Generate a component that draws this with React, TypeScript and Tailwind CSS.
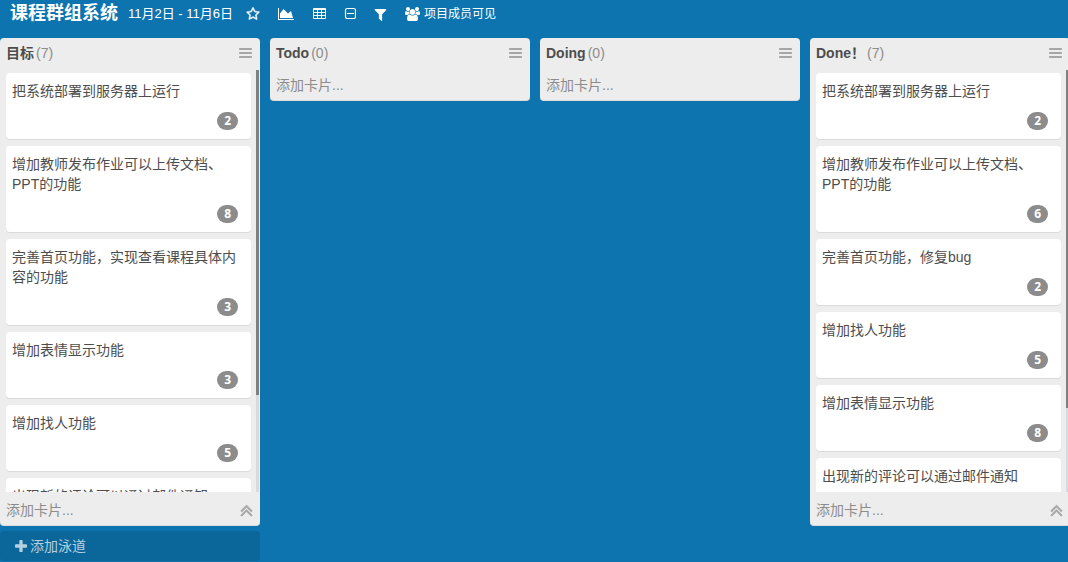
import type { ReactNode } from "react";

type Card = { title: string; points: number };
type Lane = { name: string; count: number; cards: Card[]; thumb?: string };

const lanes: Lane[] = [
  {
    name: "目标",
    count: 7,
    thumb: "h-[77%]",
    cards: [
      { title: "把系统部署到服务器上运行", points: 2 },
      { title: "增加教师发布作业可以上传文档、PPT的功能", points: 8 },
      { title: "完善首页功能，实现查看课程具体内容的功能", points: 3 },
      { title: "增加表情显示功能", points: 3 },
      { title: "增加找人功能", points: 5 },
      { title: "出现新的评论可以通过邮件通知", points: 3 },
    ],
  },
  { name: "Todo", count: 0, cards: [] },
  { name: "Doing", count: 0, cards: [] },
  {
    name: "Done！",
    count: 7,
    thumb: "h-[80%]",
    cards: [
      { title: "把系统部署到服务器上运行", points: 2 },
      { title: "增加教师发布作业可以上传文档、PPT的功能", points: 6 },
      { title: "完善首页功能，修复bug", points: 2 },
      { title: "增加找人功能", points: 5 },
      { title: "增加表情显示功能", points: 8 },
      { title: "出现新的评论可以通过邮件通知", points: 3 },
    ],
  },
];

function Glyph({ box, className, children }: { box: string; className: string; children: ReactNode }) {
  return (
    <svg viewBox={box} className={className} fill="currentColor" aria-hidden="true">
      {children}
    </svg>
  );
}

const Star = () => (
  <Glyph box="0 0 1792 1792" className="size-[14px]">
    <path
      stroke="currentColor"
      strokeWidth="60"
      d="M1201 1004l306-297-422-62-189-382-189 382-422 62 306 297-73 421 378-199 377 199zm527-357q0 22-26 48l-363 354 86 500q1 7 1 20 0 50-41 50-19 0-40-12l-449-236-449 236q-22 12-40 12-21 0-31.500-14.500t-10.500-35.500q0-6 2-20l86-500-364-354q-25-27-25-48 0-37 56-46l502-73 225-455q19-41 49-41t49 41l225 455 502 73q56 9 56 46z"
    />
  </Glyph>
);

const AreaChart = () => (
  <Glyph box="0 0 2048 1792" className="h-[14px] w-[16px]">
    <path d="M2048 1536v128h-2048v-1536h128v1408h1920zM1664 512l256 896h-1664v-576l448-576 576 576z" />
  </Glyph>
);

const Table = () => (
  <Glyph box="0 0 14 14" className="size-[14px]">
    <path
      fillRule="evenodd"
      d="M2 1h11a1 1 0 0 1 1 1v9a1 1 0 0 1-1 1h-11a1 1 0 0 1-1-1v-9a1 1 0 0 1 1-1zM2 3v2h3v-2zM6 3v2h3v-2zM10 3v2h3v-2zM2 6v2h3v-2zM6 6v2h3v-2zM10 6v2h3v-2zM2 9v2h3v-2zM6 9v2h3v-2zM10 9v2h3v-2z"
    />
  </Glyph>
);

const MinusSquare = () => (
  <Glyph box="0 0 12 14" className="h-[14px] w-[12px]">
    <rect x="1.500" y="1.500" width="10" height="10" rx="1.800" fill="none" stroke="currentColor" strokeWidth="1.200" />
    <path d="M3 6h7v1h-7z" />
  </Glyph>
);

const Filter = () => (
  <Glyph box="128 128 1536 1536" className="size-[13px]">
    <path d="M1595 295q17 41-14 70l-493 493v742q0 42-39 59-13 5-25 5-27 0-45-19l-256-256q-19-19-19-45v-486l-493-493q-31-29-14-70 17-39 59-39h1280q42 0 59 39z" />
  </Glyph>
);

const Users = () => (
  <Glyph box="0 0 1920 1792" className="h-[14px] w-[15px]">
    <path d="M593 896q-162 5-265 128h-134q-82 0-138-40.500t-56-118.500q0-353 124-353 6 0 43.500 21t97.500 42.500 119 21.500q67 0 133-23-5 37-5 66 0 139 81 256zm1071 637q0 120-73 189.500t-194 69.500h-874q-121 0-194-69.500t-73-189.500q0-53 3.500-103.500t14-109 26.500-108.500 43-97.500 62-81 85.500-53.500 111.500-20q10 0 43 21.500t73 48 107 48 135 21.500 135-21.500 107-48 73-48 43-21.500q61 0 111.500 20t85.500 53.500 62 81 43 97.500 26.500 108.500 14 109 3.500 103.500zm-1024-1277q0 106-75 181t-181 75-181-75-75-181 75-181 181-75 181 75 75 181zm704 384q0 159-112.500 271.500t-271.500 112.500-271.500-112.500-112.500-271.500 112.500-271.500 271.500-112.500 271.500 112.500 112.500 271.500zm576 225q0 78-56 118.500t-138 40.500h-134q-103-123-265-128 81-117 81-256 0-29-5-66 66 23 133 23 59 0 119-21.500t97.500-42.500 43.500-21q124 0 124 353zm-128-609q0 106-75 181t-181 75-181-75-75-181 75-181 181-75 181 75 75 181z" />
  </Glyph>
);

const Bars = () => (
  <Glyph box="0 0 13 10" className="h-[10px] w-[13px]">
    <rect width="13" height="2" rx="0.400" />
    <rect y="4" width="13" height="2" rx="0.400" />
    <rect y="8" width="13" height="2" rx="0.400" />
  </Glyph>
);

const DoubleUp = () => (
  <Glyph box="320 320 1152 1152" className="size-[13px]">
    <path
      stroke="currentColor"
      strokeWidth="60"
      d="M1395 1312q0 13-10 23l-50 50q-10 10-23 10t-23-10l-393-393-393 393q-10 10-23 10t-23-10l-50-50q-10-10-10-23t10-23l466-466q10-10 23-10t23 10l466 466q10 10 10 23zm0-384q0 13-10 23l-50 50q-10 10-23 10t-23-10l-393-393-393 393q-10 10-23 10t-23-10l-50-50q-10-10-10-23t10-23l466-466q10-10 23-10t23 10l466 466q10 10 10 23z"
    />
  </Glyph>
);

const Plus = () => (
  <Glyph box="192 128 1408 1408" className="size-[12px]">
    <path d="M1600 736v192q0 40-28 68t-68 28h-416v416q0 40-28 68t-68 28h-192q-40 0-68-28t-28-68v-416h-416q-40 0-68-28t-28-68v-192q0-40 28-68t68-28h416v-416q0-40 28-68t68-28h192q40 0 68 28t28 68v416h416q40 0 68 28t28 68z" />
  </Glyph>
);

function CardItem({ card }: { card: Card }) {
  return (
    <li className="flex shrink-0 flex-col rounded-[4px] bg-white pt-2 pr-[13px] pb-[9px] pl-[6px] shadow-[0_1px_0_#dadada]">
      <p className="text-sm leading-5 text-[#4d4d4d]">{card.title}</p>
      <span className="mt-[11px] self-end rounded-full bg-[#8c8c8c] px-[7px] font-['Noto_Sans',sans-serif] text-xs leading-[18px] font-bold text-white">
        {card.points}
      </span>
    </li>
  );
}

function LaneColumn({ lane }: { lane: Lane }) {
  const filled = lane.cards.length > 0;
  return (
    <section className="flex max-h-full w-[260px] shrink-0 flex-col overflow-hidden rounded-[4px] border-b border-[#dcdcdc] bg-[#ededed]">
      <header className="flex h-8 shrink-0 items-center gap-[2px] pr-2 pb-[2px] pl-[6px] text-sm">
        <h2 className="font-['Liberation_Sans','Noto_Sans_CJK_TC',sans-serif] font-bold text-[#4d4d4d]">{lane.name}</h2>
        <span className="text-[#8c8c8c]">({lane.count})</span>
        <button type="button" aria-label="菜单" className="ml-auto text-[#a6a6a6]">
          <Bars />
        </button>
      </header>
      {filled && (
        <div className="flex min-h-0 flex-1 pr-px">
          <ul className="flex flex-1 flex-col gap-[7px] overflow-hidden pt-[3px] pr-[5px] pl-[6px]">
            {lane.cards.map((card) => (
              <CardItem key={card.title} card={card} />
            ))}
          </ul>
          <div className="w-[3px] bg-[#d9dadd]">
            <div className={`bg-[#808080] ${lane.thumb}`} />
          </div>
        </div>
      )}
      <footer className={`flex shrink-0 items-center justify-between pr-[7px] pl-[6px] ${filled ? "h-[33px] pt-[3px]" : "h-[30px]"}`}>
        <button type="button" className="text-sm leading-5 text-[#8c8c8c]">
          添加卡片...
        </button>
        {filled && (
          <button type="button" aria-label="回到顶部" className="text-[#a6a6a6]">
            <DoubleUp />
          </button>
        )}
      </footer>
    </section>
  );
}

export default function App() {
  return (
    <div
      lang="zh-CN"
      className="flex h-screen flex-col overflow-hidden bg-[#0d74b0] font-['Liberation_Sans','Noto_Sans_CJK_SC',sans-serif]"
    >
      <header className="flex h-[38px] shrink-0 items-start pl-[10px] text-white">
        <h1 className="text-lg leading-[26px] font-bold">课程群组系统</h1>
        <span className="ml-[10px] text-[13px] leading-7">11月2日 - 11月6日</span>
        <nav className="ml-[13px] flex h-7 items-center gap-[18px]">
          <button type="button" aria-label="收藏"><Star /></button>
          <button type="button" aria-label="统计"><AreaChart /></button>
          <button type="button" aria-label="表格"><Table /></button>
          <button type="button" aria-label="折叠"><MinusSquare /></button>
          <button type="button" aria-label="筛选"><Filter /></button>
          <button type="button" className="flex items-center gap-1 text-xs">
            <Users />
            项目成员可见
          </button>
        </nav>
      </header>
      <main className="flex min-h-0 flex-1 flex-col gap-[5px] pb-px">
        <div className="flex min-h-0 flex-1 items-start gap-[10px]">
          {lanes.map((lane) => (
            <LaneColumn key={lane.name} lane={lane} />
          ))}
        </div>
        <button
          type="button"
          className="flex h-[30px] w-[260px] shrink-0 items-center gap-[3px] rounded-[4px] bg-[#0b6699] pl-[15px] text-sm text-[#b5d1e1]"
        >
          <Plus />
          添加泳道
        </button>
      </main>
    </div>
  );
}
